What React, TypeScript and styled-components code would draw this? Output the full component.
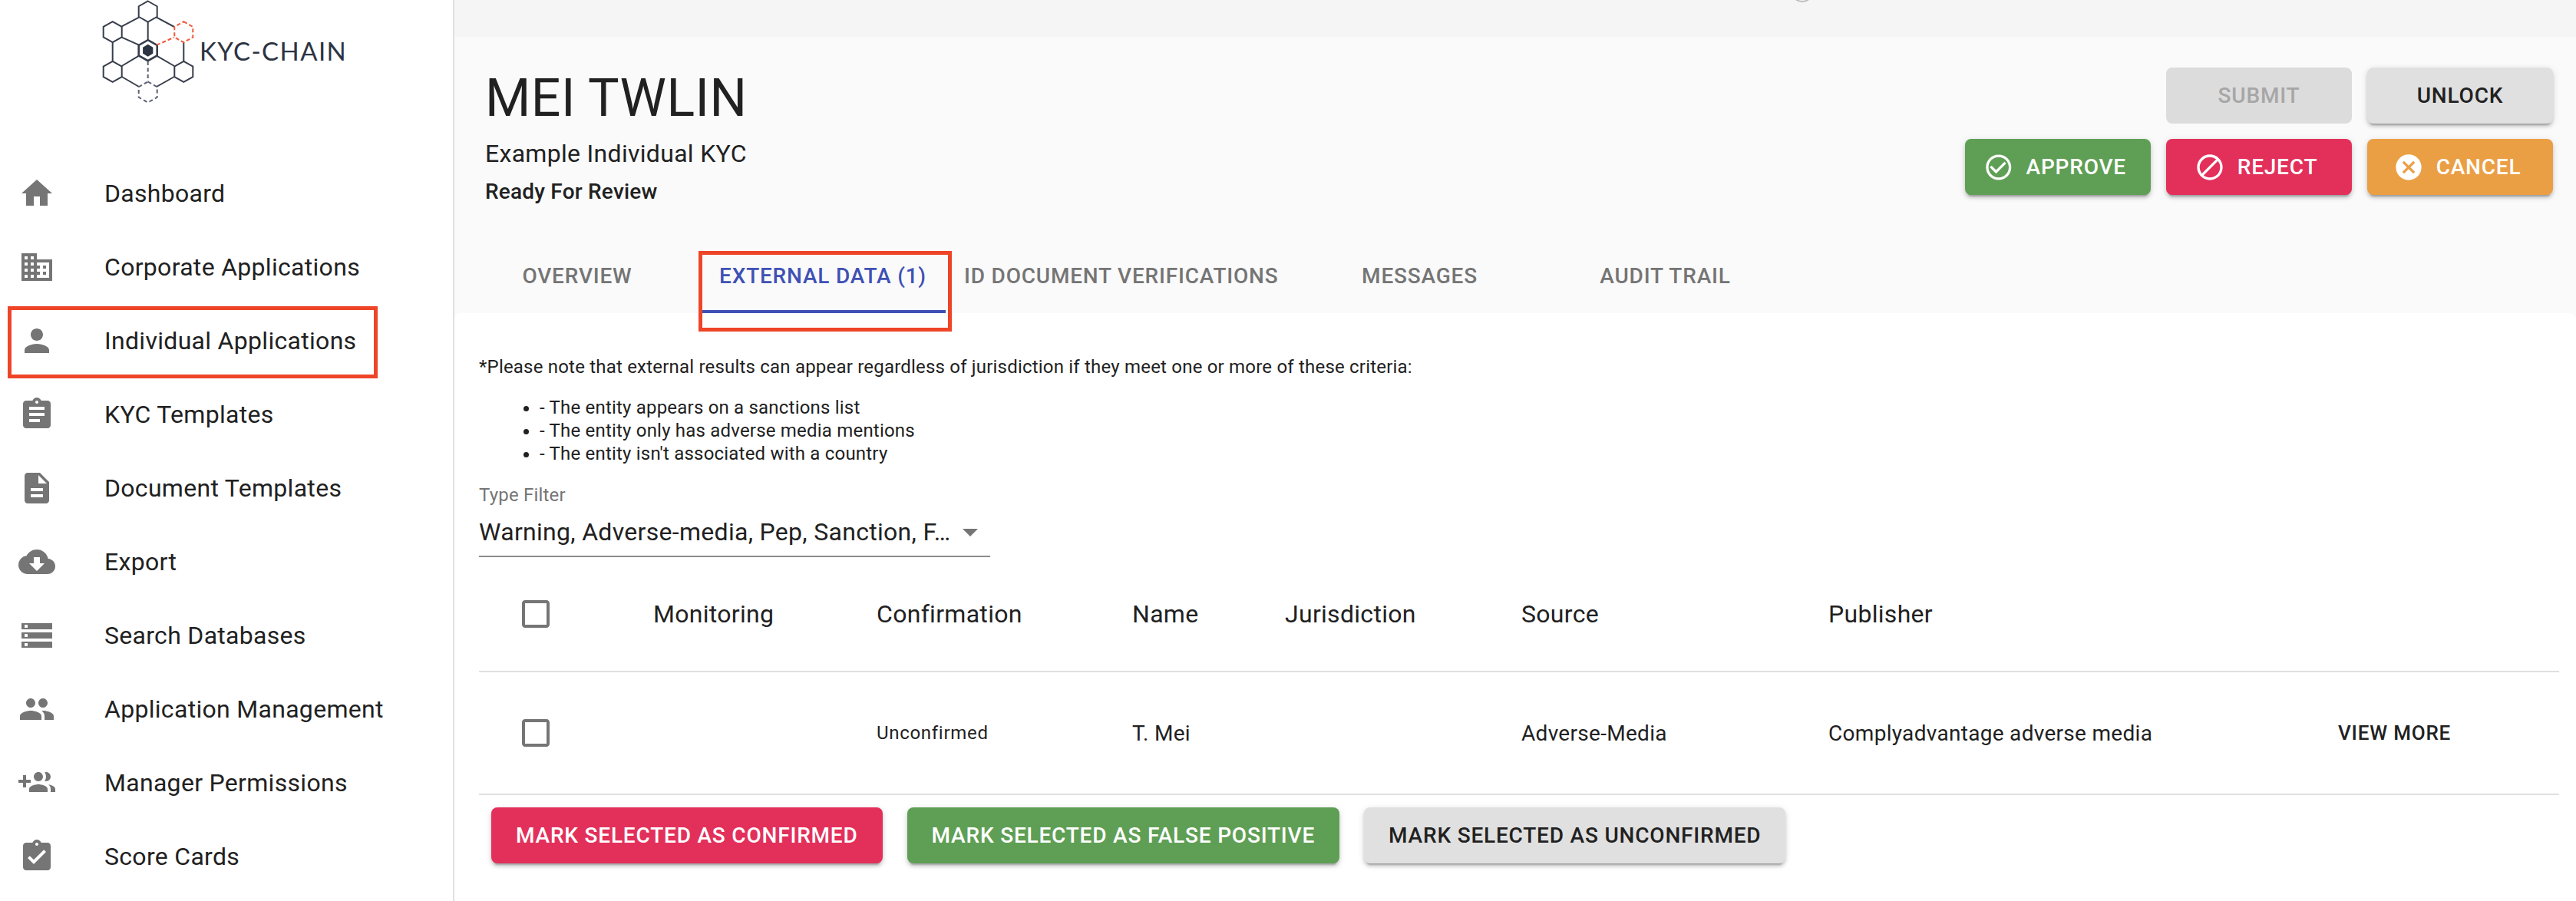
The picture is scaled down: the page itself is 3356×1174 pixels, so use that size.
import React from "react";
import styled, { createGlobalStyle } from "styled-components";
import {
  MdHome, MdDomain, MdPerson, MdAssignment, MdDescription, MdCloudDownload, MdStorage, MdPeople,
  MdAssignmentTurnedIn, MdCheckCircleOutline, MdBlock, MdCancel, MdCheckBoxOutlineBlank, MdArrowDropDown,
} from "react-icons/md";

const GlobalStyle = createGlobalStyle`
  html, body { margin: 0; padding: 0; background: #fff; }
  body { font-family: Roboto, "Liberation Sans", sans-serif; color: #212121; -webkit-font-smoothing: antialiased; }
  * { box-sizing: border-box; }
`;

const Page = styled.div`
  position: relative;
  display: flex;
  width: 3356px;
  height: 1174px;
  overflow: hidden;
  background: #fff;
`;

const Sidebar = styled.aside`
  flex: 0 0 592px;
  border-right: 2px solid #e0e0e0;
  background: #fff;
`;

const LogoArea = styled.div`
  display: flex;
  height: 204px;
  padding-left: 130px;
`;

const LogoGraphic = styled.svg`
  flex: 0 0 130px;
`;

const LogoText = styled.span`
  margin-top: 46px;
  height: 40px;
  font-family: Lato, sans-serif;
  font-size: 33px;
  line-height: 40px;
  letter-spacing: 1.4px;
  color: #2d3443;
`;

const NavList = styled.nav`
  display: flex;
  flex-direction: column;
`;

const NavItem = styled.div`
  display: flex;
  align-items: center;
  height: 96px;
  padding-left: 24px;
  font-size: 32px;
  letter-spacing: 0.3px;
  color: #212121;
  svg { flex: 0 0 48px; margin-right: 64px; color: #757575; }
`;

const Highlight = styled.div`
  position: absolute;
  border: 5px solid #ee4528;
  pointer-events: none;
`;

const NavHighlight = styled(Highlight)`
  left: 10px;
  top: 399px;
  width: 482px;
  height: 94px;
`;

const TabHighlight = styled(Highlight)`
  left: 910px;
  top: 327px;
  width: 330px;
  height: 105px;
`;

const Main = styled.main`
  flex: 1;
  display: flex;
  flex-direction: column;
  min-width: 0;
  background: #fafafa;
`;

const TopBar = styled.div`
  position: relative;
  height: 48px;
  overflow: hidden;
  background: #f5f5f5;
`;

const TopAvatar = styled.div`
  position: absolute;
  left: 1741px;
  top: -27px;
  width: 30px;
  height: 30px;
  border: 2px solid #bdbdbd;
  border-radius: 50%;
`;

const Header = styled.header`
  display: flex;
  justify-content: space-between;
  height: 264px;
  padding: 40px 30px 0 40px;
`;

const TitleBlock = styled.div`
  display: flex;
  flex-direction: column;
`;

const Title = styled.h1`
  margin: 0;
  font-size: 68px;
  font-weight: 400;
  line-height: 80px;
  letter-spacing: 0.5px;
  color: #212121;
`;

const Subtitle = styled.div`
  margin-top: 10px;
  font-size: 32px;
  line-height: 44px;
  letter-spacing: 0.3px;
`;

const Status = styled.div`
  margin-top: 9px;
  font-size: 28px;
  font-weight: 500;
  line-height: 38px;
  letter-spacing: 0.2px;
`;

const ActionStack = styled.div`
  display: flex;
  flex-direction: column;
  gap: 20px;
`;

const ActionRow = styled.div`
  display: flex;
  justify-content: flex-end;
  gap: 20px;
`;

type Variant = "disabled" | "grey" | "green" | "red" | "orange";

const fills: Record<Variant, string> = {
  disabled: "#dcdcdc",
  grey: "#e0e0e0",
  green: "#5f9f55",
  red: "#e3305b",
  orange: "#eb9f45",
};

const inks: Record<Variant, string> = {
  disabled: "#a6a6a6",
  grey: "#212121",
  green: "#fff",
  red: "#fff",
  orange: "#fff",
};

const Button = styled.button<{ $variant: Variant }>`
  display: inline-flex;
  align-items: center;
  justify-content: center;
  height: 73px;
  padding: 0 32px;
  border: 0;
  border-radius: 8px;
  font-family: Roboto, sans-serif;
  font-size: 28px;
  font-weight: 500;
  letter-spacing: 0.8px;
  text-transform: uppercase;
  background: ${(p) => fills[p.$variant]};
  color: ${(p) => inks[p.$variant]};
  box-shadow: ${(p) =>
    p.$variant === "disabled"
      ? "none"
      : "0 6px 2px -4px rgba(0,0,0,.2), 0 4px 4px rgba(0,0,0,.14), 0 2px 10px rgba(0,0,0,.12)"};
  svg { margin: 0 16px 0 -8px; }
`;

const ActionButton = styled(Button)`
  width: 242px;
`;

const Tabs = styled.div`
  display: flex;
  height: 96px;
`;

const Tab = styled.div<{ $active?: boolean }>`
  display: flex;
  justify-content: center;
  align-items: center;
  min-width: 320px;
  padding: 2px 24px 0;
  font-size: 28px;
  font-weight: 500;
  letter-spacing: 0.8px;
  text-transform: uppercase;
  color: ${(p) => (p.$active ? "#3f51b5" : "#757575")};
  border-bottom: 4px solid ${(p) => (p.$active ? "#3f51b5" : "transparent")};
`;

const Panel = styled.section`
  flex: 1;
  padding: 52px 22px 0 32px;
  background: #fff;
  border-radius: 8px 8px 0 0;
`;

const Note = styled.div`
  font-size: 24px;
  line-height: 36px;
  letter-spacing: 0.2px;
`;

const NoteList = styled.ul`
  margin: 20px 0 0;
  padding-left: 79px;
  font-size: 24px;
  line-height: 30px;
  letter-spacing: 0.2px;
`;

const Filter = styled.div`
  width: 666px;
  margin-top: 25px;
`;

const FilterLabel = styled.div`
  font-size: 24px;
  line-height: 28px;
  letter-spacing: 0.2px;
  color: #757575;
`;

const FilterSelect = styled.div`
  display: flex;
  align-items: center;
  justify-content: space-between;
  height: 67px;
  padding: 14px 2px 12px 0;
  border-bottom: 2px solid #8c8c8c;
  font-size: 32px;
  letter-spacing: 0.3px;
  svg { color: #757575; }
`;

const TableRow = styled.div<{ $height: number }>`
  display: grid;
  grid-template-columns: 227px 291px 333px 199px 308px 400px 664px 1fr;
  align-items: center;
  height: ${(p) => p.$height}px;
  border-bottom: 2px solid #e0e0e0;
`;

const CheckCell = styled.div`
  display: flex;
  padding-left: 50px;
  svg { color: #757575; }
`;

const HeadCell = styled.div`
  font-size: 32px;
  letter-spacing: 0.3px;
`;

const SmallCell = styled.div`
  font-size: 24px;
  letter-spacing: 0.7px;
`;

const BodyCell = styled.div`
  font-size: 28px;
  letter-spacing: 0.3px;
`;

const MoreCell = styled.div`
  font-size: 26px;
  font-weight: 500;
  letter-spacing: 0.8px;
`;

const BulkActions = styled.div`
  display: flex;
  gap: 32px;
  padding: 16px 0 0 16px;
`;

const LogoMark: React.FC = () => {
  const hex = (cx: number, cy: number, r = 13.5, w = 12) =>
    `${cx},${cy - r} ${cx + w},${cy - r / 2} ${cx + w},${cy + r / 2} ${cx},${cy + r} ${cx - w},${cy + r / 2} ${cx - w},${cy - r / 2}`;
  const solid: [number, number, number, number][] = [
    [51, 22.7, 28.7, 34.3],
    [74, 22.7, 97, 35],
    [62.7, 28, 62.7, 52],
    [28.7, 48.6, 51, 58.7],
    [16.7, 55, 16.7, 80],
    [51, 72.7, 28.7, 86],
    [74, 72.7, 97, 86],
    [109.3, 55, 109.3, 80],
    [28.7, 100, 51, 113],
    [97, 100, 74, 113],
  ];
  return (
    <LogoGraphic width="130" height="140" viewBox="0 0 130 140">
      <g fill="none" stroke="#373d4b" strokeWidth="2">
        {solid.map((l, i) => (
          <line key={i} x1={l[0]} y1={l[1]} x2={l[2]} y2={l[3]} />
        ))}
        <polygon points={hex(62.7, 15)} />
        <polygon points={hex(16.7, 41.7)} />
        <polygon points={hex(16.7, 93.3)} />
        <polygon points={hex(109.3, 93.3)} />
        <polygon points={hex(62.7, 65.7)} strokeWidth="2.6" />
      </g>
      <polygon points={hex(62.7, 65.7, 8, 6.6)} fill="#2d3443" />
      <g fill="none" stroke="#ee5a3a" strokeWidth="2" strokeDasharray="5 3">
        <polygon points={hex(109.3, 41.7)} />
        <line x1="74" y1="58.7" x2="97" y2="48.6" />
      </g>
      <g fill="none" stroke="#5b6070" strokeWidth="2" strokeDasharray="5 3.5">
        <polygon points={hex(62.7, 120)} />
        <line x1="62.7" y1="80" x2="62.7" y2="106" />
      </g>
    </LogoGraphic>
  );
};

const GroupAddIcon: React.FC<{ size?: number }> = ({ size = 24 }) => (
  <svg width={size} height={size} viewBox="0 0 24 24" fill="currentColor">
    <path d="M8 10H5V7H3v3H0v2h3v3h2v-3h3v-2zm10 1c1.66 0 2.99-1.34 2.99-3S19.66 5 18 5c-.32 0-.63.05-.91.14.57.81.9 1.79.9 2.86s-.34 2.04-.9 2.86c.28.09.59.14.91.14zm-5 0c1.66 0 2.99-1.34 2.99-3S14.66 5 13 5s-3 1.34-3 3 1.34 3 3 3zm6.62 2.16c.83.73 1.38 1.66 1.38 2.84v2h3v-2c0-1.54-2.37-2.49-4.38-2.84zM13 13c-2 0-6 1-6 3v2h12v-2c0-2-4-3-6-3z" />
  </svg>
);

const navItems: [React.ComponentType<{ size?: number }>, string][] = [
  [MdHome, "Dashboard"],
  [MdDomain, "Corporate Applications"],
  [MdPerson, "Individual Applications"],
  [MdAssignment, "KYC Templates"],
  [MdDescription, "Document Templates"],
  [MdCloudDownload, "Export"],
  [MdStorage, "Search Databases"],
  [MdPeople, "Application Management"],
  [GroupAddIcon, "Manager Permissions"],
  [MdAssignmentTurnedIn, "Score Cards"],
];

const tabs = ["Overview", "External Data (1)", "ID Document Verifications", "Messages", "Audit Trail"];

export default function App() {
  return (
    <Page>
      <GlobalStyle />
      <Sidebar>
        <LogoArea>
          <LogoMark />
          <LogoText>KYC-CHAIN</LogoText>
        </LogoArea>
        <NavList>
          {navItems.map(([Icon, label]) => (
            <NavItem key={label}>
              <Icon size={48} />
              {label}
            </NavItem>
          ))}
        </NavList>
      </Sidebar>
      <Main>
        <TopBar>
          <TopAvatar />
        </TopBar>
        <Header>
          <TitleBlock>
            <Title>MEI TWLIN</Title>
            <Subtitle>Example Individual KYC</Subtitle>
            <Status>Ready For Review</Status>
          </TitleBlock>
          <ActionStack>
            <ActionRow>
              <ActionButton $variant="disabled">Submit</ActionButton>
              <ActionButton $variant="grey">Unlock</ActionButton>
            </ActionRow>
            <ActionRow>
              <ActionButton $variant="green"><MdCheckCircleOutline size={40} />Approve</ActionButton>
              <ActionButton $variant="red"><MdBlock size={40} />Reject</ActionButton>
              <ActionButton $variant="orange"><MdCancel size={40} />Cancel</ActionButton>
            </ActionRow>
          </ActionStack>
        </Header>
        <Tabs>
          {tabs.map((t, i) => (
            <Tab key={t} $active={i === 1}>{t}</Tab>
          ))}
        </Tabs>
        <Panel>
          <Note>*Please note that external results can appear regardless of jurisdiction if they meet one or more of these criteria:</Note>
          <NoteList>
            <li>- The entity appears on a sanctions list</li>
            <li>- The entity only has adverse media mentions</li>
            <li>- The entity isn't associated with a country</li>
          </NoteList>
          <Filter>
            <FilterLabel>Type Filter</FilterLabel>
            <FilterSelect>
              <span>Warning, Adverse-media, Pep, Sanction, F…</span>
              <MdArrowDropDown size={48} />
            </FilterSelect>
          </Filter>
          <TableRow $height={150}>
            <CheckCell><MdCheckBoxOutlineBlank size={48} /></CheckCell>
            <HeadCell>Monitoring</HeadCell>
            <HeadCell>Confirmation</HeadCell>
            <HeadCell>Name</HeadCell>
            <HeadCell>Jurisdiction</HeadCell>
            <HeadCell>Source</HeadCell>
            <HeadCell>Publisher</HeadCell>
          </TableRow>
          <TableRow $height={160}>
            <CheckCell><MdCheckBoxOutlineBlank size={48} /></CheckCell>
            <div />
            <SmallCell>Unconfirmed</SmallCell>
            <BodyCell>T. Mei</BodyCell>
            <div />
            <BodyCell>Adverse-Media</BodyCell>
            <BodyCell>Complyadvantage adverse media</BodyCell>
            <MoreCell>VIEW MORE</MoreCell>
          </TableRow>
          <BulkActions>
            <Button $variant="red">Mark selected as confirmed</Button>
            <Button $variant="green">Mark selected as false positive</Button>
            <Button $variant="grey">Mark selected as unconfirmed</Button>
          </BulkActions>
        </Panel>
      </Main>
      <NavHighlight />
      <TabHighlight />
    </Page>
  );
}
